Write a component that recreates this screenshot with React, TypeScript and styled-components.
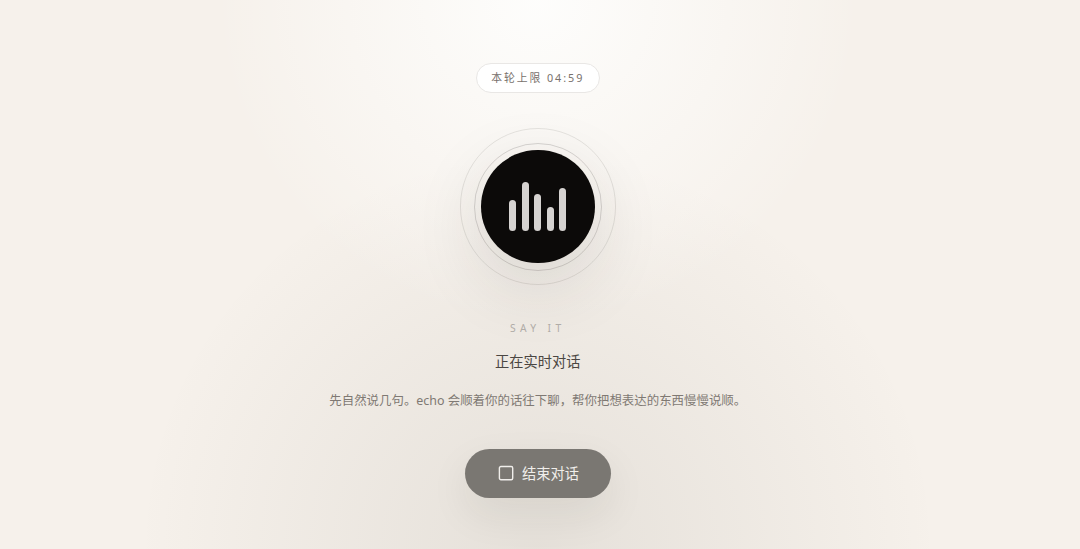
import React from "react";
import styled, { createGlobalStyle } from "styled-components";

const GlobalStyle = createGlobalStyle`
  * {
    box-sizing: border-box;
  }
  body {
    margin: 0;
    background: #f6f1eb;
    font-family: "Noto Sans", "Noto Sans CJK SC", sans-serif;
  }
`;

const Page = styled.main`
  height: 549px;
  padding: 62.6px 4.5px 0 0;
  overflow: hidden;
  display: flex;
  flex-direction: column;
  align-items: center;
  background:
    radial-gradient(circle at 537.75px 0, rgba(254, 254, 253, 0.94), rgba(250, 252, 244, 0) 323px),
    radial-gradient(circle at 537.75px 549px, rgba(68, 64, 50, 0.095), rgba(68, 64, 50, 0) 400px),
    #f6f1eb;
`;

const Limit = styled.div`
  height: 30.2px;
  padding: 0 14.2px 1.4px;
  display: flex;
  align-items: center;
  border: 1px solid #e9e7e5;
  border-radius: 16px;
  background: rgba(255, 255, 255, 0.9);
  color: #78716c;
  font-size: 10.8px;
  letter-spacing: 1.96px;
`;

const OuterRing = styled.div`
  flex: none;
  width: 156.4px;
  height: 156.4px;
  margin-top: 35.6px;
  display: grid;
  place-items: center;
  border: 1px solid rgba(28, 25, 23, 0.1);
  border-radius: 50%;
`;

const InnerRing = styled.div`
  width: 128px;
  height: 128px;
  display: grid;
  place-items: center;
  border: 1px solid rgba(28, 25, 23, 0.16);
  border-radius: 50%;
`;

const Orb = styled.div`
  width: 113.8px;
  height: 113.8px;
  padding-bottom: 32px;
  display: flex;
  align-items: flex-end;
  justify-content: center;
  gap: 5.3px;
  border-radius: 50%;
  background: #0c0a09;
  box-shadow: 0 21px 71px rgba(40, 36, 26, 0.14);
`;

const Bar = styled.span<{ $height: number }>`
  width: 7.1px;
  height: ${({ $height }) => $height}px;
  border-radius: 4px;
  background: #d6d3d1;
`;

const Eyebrow = styled.p`
  margin: 35.4px 0 0;
  color: #b0aca7;
  font-size: 10.3px;
  line-height: 17.8px;
  letter-spacing: 4.4px;
`;

const Title = styled.h1`
  margin: 13.4px 0 0;
  color: #4a4642;
  font-size: 14.22px;
  font-weight: 400;
  line-height: 21.3px;
`;

const Description = styled.p`
  margin: 16.6px 0 0;
  color: #7f7973;
  font-size: 12.44px;
  line-height: 24.9px;
  white-space: nowrap;
`;

const EndButton = styled.button`
  flex: none;
  width: 146px;
  height: 49.8px;
  margin-top: 34.4px;
  padding: 0 0 0 1.4px;
  display: flex;
  align-items: center;
  justify-content: center;
  gap: 8px;
  border: 0;
  border-radius: 25px;
  background: #7a7772;
  color: #f0eeeb;
  font: inherit;
  font-size: 14.22px;
  box-shadow: 0 16px 40px rgba(40, 36, 26, 0.08);
`;

const bars = [31, 49.8, 37.3, 24.9, 43.5];

const App: React.FC = () => {
  return (
    <Page>
      <GlobalStyle />
      <Limit>本轮上限 04:59</Limit>
      <OuterRing>
        <InnerRing>
          <Orb>
            {bars.map((height) => (
              <Bar key={height} $height={height} />
            ))}
          </Orb>
        </InnerRing>
      </OuterRing>
      <Eyebrow>SAY IT</Eyebrow>
      <Title>正在实时对话</Title>
      <Description>先自然说几句。echo 会顺着你的话往下聊，帮你把想表达的东西慢慢说顺。</Description>
      <EndButton>
        <svg width="16" height="16" viewBox="0 0 16 16" fill="none" aria-hidden="true">
          <rect x="1.4" y="1.5" width="13.3" height="13.3" rx="1.5" stroke="currentColor" strokeWidth="1.4" />
        </svg>
        结束对话
      </EndButton>
    </Page>
  );
};

export default App;
